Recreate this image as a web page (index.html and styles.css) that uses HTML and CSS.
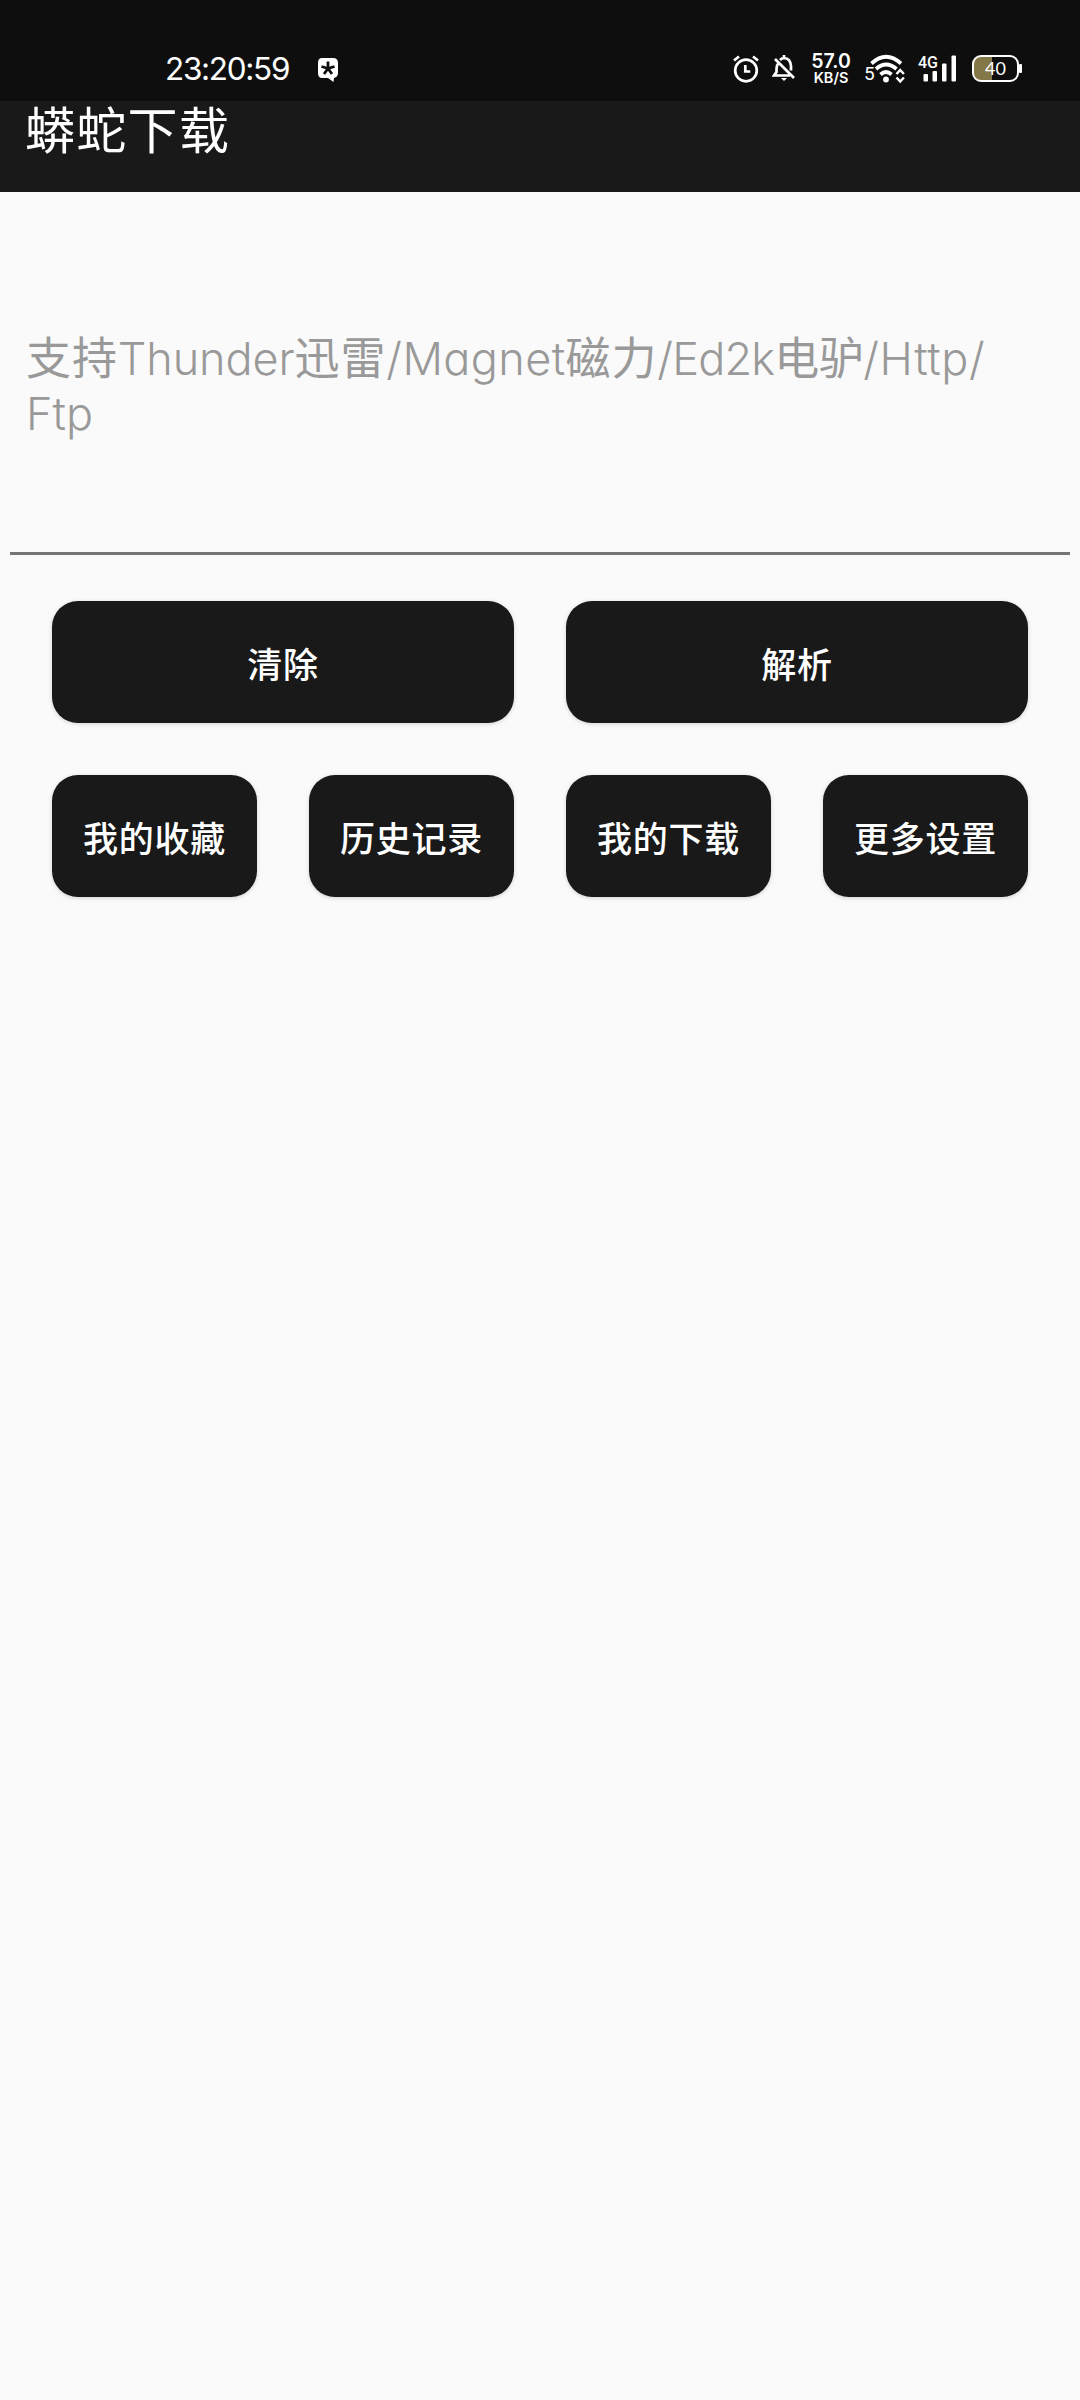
FILE: index.html
```html
<!DOCTYPE html>
<html lang="zh-CN">
<head>
<meta charset="utf-8">
<title>蟒蛇下载</title>
<link rel="stylesheet" href="styles.css">
</head>
<body>
<div class="status">
  <span class="clock">23:20:59</span>
  <svg class="chat" width="22" height="26" viewBox="0 0 22 26"><path fill="#fff" d="M5 1h11q5 0 5 5v10q0 4-4 5l-.5 4-5.500-4H5q-4 0-4-5V6q0-5 4-5z"/><path stroke="#0e0e0e" stroke-width="2.800" d="M11 11.500V4.500M11 11.500l6.500-2M11 11.500l4 5.500M11 11.500l-4 5.500M11 11.500l-6.500-2"/></svg>
  <svg class="alarm" width="28" height="30" viewBox="0 0 28 30" fill="none" stroke="#fff" stroke-width="2.700"><circle cx="14" cy="16.500" r="10.800"/><path d="M13.300 11v6.500h5M2 6.500l5-4M26 6.500l-5-4"/></svg>
  <svg class="bell" width="24" height="28" viewBox="0 0 24 28" fill="none" stroke="#fff" stroke-width="2.700"><path d="M7 8.500Q4.500 11 4.500 15v3L2 21.500h16M8 6q2-2 4-2 6.500.5 7 8v4.500M12 1v3M3 5l19 19"/><path d="M9 24h6l-3 3z" fill="#fff" stroke="none"/></svg>
  <span class="rate"><span class="rate-num">57.0</span><span class="rate-unit">KB/S</span></span>
  <span class="wifi-gen">5</span>
  <svg class="wifi" width="37" height="30" viewBox="0 0 37 30" fill="none" stroke="#fff" stroke-width="3.800"><path d="M2.500 9.500Q17 -4 32 9.500M7 15q10-9 20.500 0M11.500 20.500q5.500-5 11 0"/><circle cx="17" cy="25.500" r="2.900" fill="#fff" stroke="none"/><path stroke-width="2.500" d="M27.500 20l3.700-4 3.700 4M27.500 23.500l3.700 4 3.700-4"/></svg>
  <span class="signal"><span class="net">4G</span><svg width="40" height="30" viewBox="0 0 40 30" fill="#fff"><rect x="5.500" y="20" width="4.500" height="7.500" rx="1"/><rect x="14.500" y="17" width="4.500" height="10.500" rx="1"/><rect x="24" y="9.500" width="4.500" height="18" rx="1"/><rect x="33.500" y="1.500" width="4.500" height="26" rx="1"/></svg></span>
  <span class="battery"><span class="level">40</span></span>
</div>
<header class="bar"><h1 class="title">蟒蛇下载</h1></header>
<main>
  <div class="field"><span class="cjk">支持</span><span class="w1">Thunder</span><span class="cjk">迅雷</span><span class="w2">/Magnet</span><span class="cjk">磁力</span><span class="w3">/Ed2k</span><span class="cjk tight">电驴</span><span class="w4">/Http/</span><br><span class="w5">Ftp</span></div>
  <div class="row two"><button class="btn">清除</button><button class="btn">解析</button></div>
  <div class="row four"><button class="btn">我的收藏</button><button class="btn">历史记录</button><button class="btn">我的下载</button><button class="btn">更多设置</button></div>
</main>
</body>
</html>
```
FILE: styles.css
```css
* { box-sizing: border-box; }
body { margin: 0; width: 1080px; height: 2400px; background: #fafafa; font-family: Inter, "Noto Sans CJK SC", sans-serif; }
.status { height: 101px; background: #0e0e0e; color: #fff; display: flex; align-items: flex-start; padding: 54px 57px 0 165px; }
.clock { width: 152px; font-size: 31.5px; line-height: 30px; letter-spacing: -1.3px; white-space: nowrap; }
.chat { margin-top: 3px; }
.alarm { margin-left: 393px; }
.bell { margin: 0 0 0 12px; }
.rate { margin-left: 15px; width: 40px; display: flex; flex-direction: column; align-items: center; font-weight: 600; white-space: nowrap; }
.rate-num { font-size: 19.5px; line-height: 15px; }
.rate-unit { font-size: 14.5px; line-height: 16px; margin-top: 1px; }
.wifi-gen { margin: 12px 0 0 13px; width: 8px; font-size: 19px; line-height: 16px; font-family: Roboto, sans-serif; }
.wifi { margin-left: -3px; }
.signal { margin-left: 12px; width: 40px; height: 30px; position: relative; }
.net { position: absolute; left: 0; top: 1px; font: 500 16px/15px Roboto, sans-serif; }
.battery { margin: 1px 0 0 14px; width: 47px; height: 27px; border: 2.5px solid #fff; border-radius: 9px; position: relative; background: linear-gradient(90deg, #857848 42%, transparent 42%); }
.battery::after { content: ""; position: absolute; left: 45px; top: 7px; width: 3px; height: 9px; background: #fff; border-radius: 1px; }
.level { display: block; text-align: center; font: 400 18px/22px Lato, sans-serif; }
.bar { height: 91px; background: #191919; padding: 0 25px; }
.title { margin: 0; padding-top: 4px; color: #fff; font-size: 50px; line-height: 52px; font-weight: 400; letter-spacing: 1.3px; }
.field { margin: 0 10px; height: 363px; padding: 139px 16px 0; border-bottom: 3px solid #757575; color: #999; font-size: 45px; line-height: 55px; font-weight: 350; white-space: nowrap; font-feature-settings: "cv11"; }
.cjk { font-weight: 400; letter-spacing: 0.9px; }
.tight { letter-spacing: -0.5px; }
.w1 { letter-spacing: -0.1px; }
.w2 { letter-spacing: 0.4px; }
.w3 { letter-spacing: -0.8px; }
.w4 { letter-spacing: 0.6px; }
.row { padding: 0 52px; display: grid; gap: 52px; }
.two { grid-template-columns: repeat(2, 1fr); margin-top: 46px; }
.four { grid-template-columns: repeat(4, 1fr); margin-top: 52px; }
.btn { height: 122px; padding: 0; border: 0; border-radius: 26px; background: #191919; color: #fff; font-family: "Noto Sans CJK SC", sans-serif; font-size: 35px; font-weight: 500; letter-spacing: 0.8px; box-shadow: 0 1px 4px rgba(0,0,0,.16); white-space: nowrap; }
```
